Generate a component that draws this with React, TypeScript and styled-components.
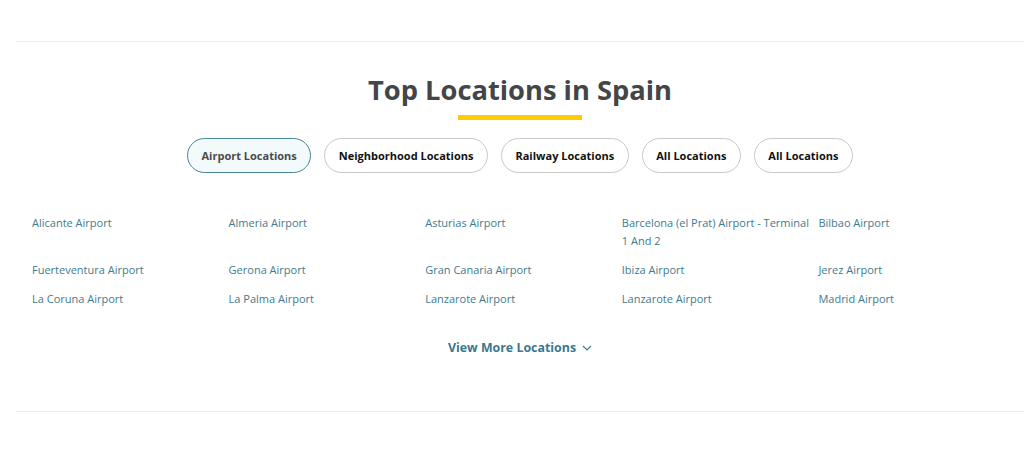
import React, { useState } from "react";
import styled, { createGlobalStyle } from "styled-components";

const Global = createGlobalStyle`
  html, body { margin: 0; padding: 0; background: #fff; }
  body { font-family: "Open Sans", "Noto Sans", Arial, sans-serif; overflow: hidden; }
  * { box-sizing: border-box; }
`;

const Page = styled.div`
  padding: 41px 0 0 16px;
  width: 1024px;
`;

const Section = styled.section`
  border-top: 1px solid #ececec;
  border-bottom: 1px solid #ececec;
  padding: 29px 16px 0 16px;
  height: 371px;
  display: flex;
  flex-direction: column;
  align-items: center;
`;

const Title = styled.h2`
  margin: 0;
  font-size: 27.3px;
  line-height: 38px;
  font-weight: 700;
  color: #444546;
`;

const Bar = styled.div`
  width: 124px;
  height: 5px;
  background: #ffcc00;
  margin-top: 6px;
`;

const Tabs = styled.div`
  display: flex;
  gap: 13px;
  margin-top: 18px;
`;

const Tab = styled.button<{ $active?: boolean }>`
  height: 35px;
  padding: 0 13.5px;
  border-radius: 18px;
  font-family: inherit;
  font-size: 11px;
  font-weight: 700;
  cursor: pointer;
  color: ${(p) => (p.$active ? "#4a4a4a" : "#111")};
  background: ${(p) => (p.$active ? "#f3fafc" : "#fff")};
  border: 1px solid ${(p) => (p.$active ? "#4a8499" : "#c9c9c9")};
`;

const Grid = styled.div`
  align-self: flex-start;
  width: 983px;
  display: grid;
  grid-template-columns: repeat(5, 1fr);
  row-gap: 11px;
  margin-top: 41px;
`;

const LinkItem = styled.a`
  font-size: 11px;
  line-height: 18px;
  color: #3f7a8e;
  text-decoration: none;
  padding-right: 8px;
`;

const More = styled.button`
  margin-top: 31px;
  border: none;
  background: none;
  font-family: inherit;
  font-size: 12.4px;
  font-weight: 700;
  color: #3a7791;
  display: flex;
  align-items: center;
  gap: 6px;
  cursor: pointer;
  padding: 0;
`;

const tabs = [
  "Airport Locations",
  "Neighborhood Locations",
  "Railway Locations",
  "All Locations",
  "All Locations",
];

const locations = [
  "Alicante Airport",
  "Almeria Airport",
  "Asturias Airport",
  "Barcelona (el Prat) Airport - Terminal 1 And 2",
  "Bilbao Airport",
  "Fuerteventura Airport",
  "Gerona Airport",
  "Gran Canaria Airport",
  "Ibiza Airport",
  "Jerez Airport",
  "La Coruna Airport",
  "La Palma Airport",
  "Lanzarote Airport",
  "Lanzarote Airport",
  "Madrid Airport",
];

export default function App() {
  const [active, setActive] = useState(0);
  return (
    <>
      <Global />
      <Page>
        <Section>
          <Title>Top Locations in Spain</Title>
          <Bar />
          <Tabs>
            {tabs.map((t, i) => (
              <Tab key={i} $active={i === active} onClick={() => setActive(i)}>
                {t}
              </Tab>
            ))}
          </Tabs>
          <Grid>
            {locations.map((l, i) => (
              <LinkItem key={i} href="#">
                {l}
              </LinkItem>
            ))}
          </Grid>
          <More>
            View More Locations
            <svg width="10" height="6" viewBox="0 0 10 6" fill="none">
              <path d="M1 1l4 4 4-4" stroke="#3a7791" strokeWidth="1.1" />
            </svg>
          </More>
        </Section>
      </Page>
    </>
  );
}
